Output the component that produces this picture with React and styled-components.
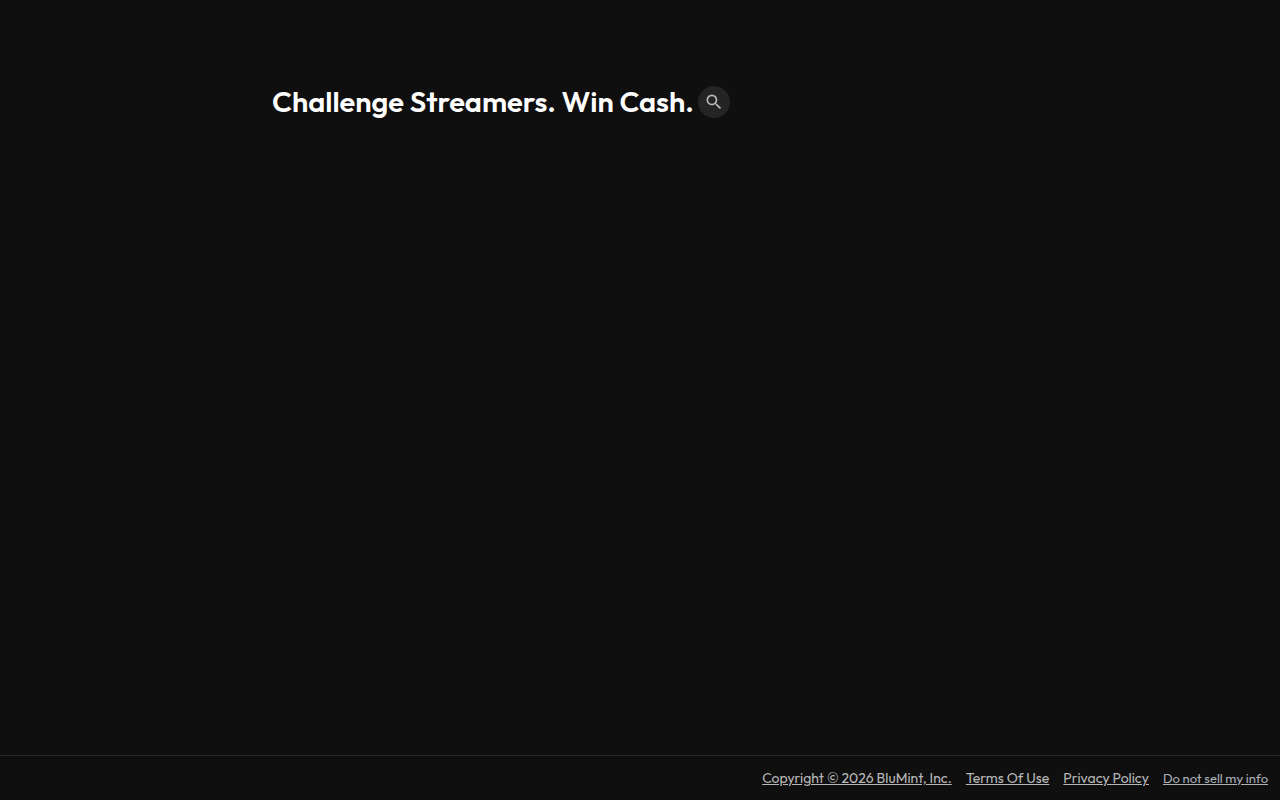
import React from 'react'
import styled, { createGlobalStyle } from 'styled-components'
import { MdSearch } from 'react-icons/md'

const GlobalStyle = createGlobalStyle`
* {
    box-sizing: border-box;
}
body {
    margin: 0;
    background-color: #0f0f0f;
    font-family: Outfit, Lato, 'Open Sans', sans-serif;
}
`

const Page = styled.div`
display: flex;
flex-direction: column;
min-height: 100vh;
`

const Main = styled.main`
flex: 1;
width: 100%;
max-width: 736px;
margin: 0 auto;
padding-top: 84px;
`

const Header = styled.div`
display: flex;
align-items: center;
gap: 4px;
`

const Title = styled.h1`
margin: 0;
color: #ffffff;
font-size: 29px;
font-weight: 600;
line-height: 36px;
`

const SearchButton = styled.button`
display: flex;
flex-shrink: 0;
align-items: center;
justify-content: center;
width: 32px;
height: 32px;
padding: 0;
border: 0;
border-radius: 50%;
background-color: #242424;
color: #b7b7b7;
font-size: 20px;
cursor: pointer;
`

const Footer = styled.footer`
display: flex;
flex-wrap: wrap;
align-items: baseline;
justify-content: flex-end;
gap: 14px;
padding: 12px;
border-top: 1px solid #272727;
`

const FooterLink = styled.a`
color: ${props => props.$small ? '#abb2ba' : '#b7b7b7'};
font-size: ${props => props.$small ? '13px' : '14px'};
line-height: 20px;
text-decoration: underline;
`

const App = () => {
    return (
        <Page>
            <GlobalStyle />
            <Main>
                <Header>
                    <Title>Challenge Streamers. Win Cash.</Title>
                    <SearchButton type='button' aria-label='Search'><MdSearch /></SearchButton>
                </Header>
            </Main>
            <Footer>
                <FooterLink href='#copyright'>Copyright © 2026 BluMint, Inc.</FooterLink>
                <FooterLink href='#terms'>Terms Of Use</FooterLink>
                <FooterLink href='#privacy'>Privacy Policy</FooterLink>
                <FooterLink href='#do-not-sell' $small>Do not sell my info</FooterLink>
            </Footer>
        </Page>
    );
}
export default App;
